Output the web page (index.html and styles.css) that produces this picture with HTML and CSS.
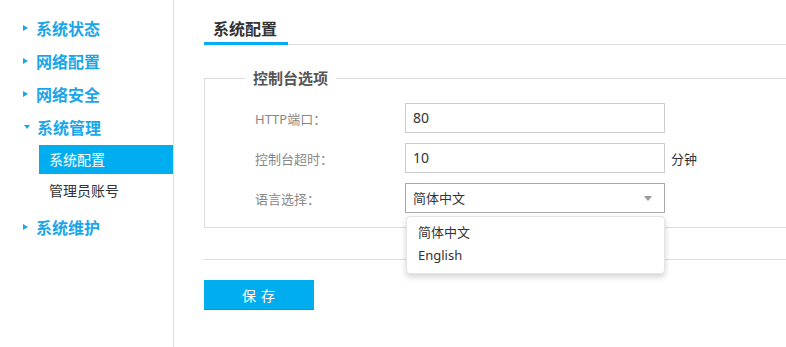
FILE: index.html
```html
<!DOCTYPE html>
<html lang="zh-CN">
<head>
<meta charset="utf-8">
<title>系统配置</title>
<link rel="stylesheet" href="styles.css">
</head>
<body>
<div class="layout">
  <aside class="sidebar">
    <ul class="menu">
      <li class="menu-item"><span class="tri tri-right"></span>系统状态</li>
      <li class="menu-item"><span class="tri tri-right"></span>网络配置</li>
      <li class="menu-item"><span class="tri tri-right"></span>网络安全</li>
      <li class="menu-item"><span class="tri tri-down"></span>系统管理</li>
      <li class="submenu">
        <div class="sub-item active">系统配置</div>
        <div class="sub-item">管理员账号</div>
      </li>
      <li class="menu-item"><span class="tri tri-right"></span>系统维护</li>
    </ul>
  </aside>
  <main class="main">
    <div class="tabs"><div class="tab">系统配置</div></div>
    <fieldset class="group">
      <legend class="group-title">控制台选项</legend>
      <div class="row">
        <label class="label">HTTP端口：</label>
        <div class="input">80</div>
      </div>
      <div class="row">
        <label class="label">控制台超时：</label>
        <div class="input">10</div>
        <span class="unit">分钟</span>
      </div>
      <div class="row">
        <label class="label">语言选择：</label>
        <div class="select-wrap">
          <div class="select">简体中文<span class="caret"></span></div>
          <ul class="dropdown">
            <li class="option">简体中文</li>
            <li class="option">English</li>
          </ul>
        </div>
      </div>
    </fieldset>
    <div class="divider"></div>
    <button class="save">保 存</button>
  </main>
</div>
</body>
</html>
```

FILE: styles.css
```css
html, body {
  margin: 0;
  padding: 0;
  overflow: hidden;
  background: #fff;
}
body {
  font-family: "Noto Sans", "Noto Sans CJK SC", sans-serif;
  color: #333;
  font-size: 14px;
}
.layout {
  display: flex;
  height: 347px;
}
.sidebar {
  width: 173px;
  flex: none;
  border-right: 1px solid #dcdcdc;
}
.menu {
  list-style: none;
  margin: 0;
  padding: 11px 0 0 0;
}
.menu-item {
  display: flex;
  align-items: center;
  height: 33px;
  padding-left: 23px;
  font-size: 16px;
  font-weight: bold;
  color: #1aa6e8;
  font-family: "Noto Sans CJK SC", sans-serif;
}
.tri {
  width: 0;
  height: 0;
  margin-right: 8px;
  margin-top: 1px;
}
.tri-right {
  border-top: 3px solid transparent;
  border-bottom: 3px solid transparent;
  border-left: 5px solid #1aa6e8;
}
.tri-down {
  border-left: 3px solid transparent;
  border-right: 3px solid transparent;
  border-top: 4px solid #1aa6e8;
  margin-left: 1px;
  margin-right: 7px;
}
.submenu {
  padding-left: 39px;
  margin-bottom: 6px;
  margin-top: 2px;
}
.sub-item {
  height: 29px;
  line-height: 29px;
  padding-left: 10px;
  font-size: 14px;
  color: #333;
  font-family: "Noto Sans CJK SC", sans-serif;
}
.sub-item + .sub-item {
  height: 30px;
  line-height: 32px;
}
.sub-item.active {
  background: #00aeef;
  color: #fff;
}
.main {
  flex: 1;
  padding-left: 30px;
  padding-top: 16px;
  overflow: hidden;
}
.tabs {
  display: flex;
  border-bottom: 1px solid #dcdcdc;
}
.tab {
  padding: 0 10px 2px 9px;
  line-height: 24px;
  font-size: 16px;
  font-weight: bold;
  color: #333;
  border-bottom: 3px solid #00aeef;
  margin-bottom: -1px;
  font-family: "Noto Sans CJK SC", sans-serif;
  width: 65px;
}
.group {
  margin: 23px -10px 0 0;
  padding: 15px 0 14px 50px;
  border: 1px solid #dcdcdc;
  min-width: 0;
}
.group-title {
  margin-left: -10px;
  padding: 0 8px;
  line-height: 20px;
  font-size: 15px;
  font-weight: bold;
  color: #555;
  font-family: "Noto Sans CJK SC", sans-serif;
}
.row {
  display: flex;
  align-items: center;
  height: 30px;
}
.row + .row {
  margin-top: 10px;
}
.label {
  width: 150px;
  font-size: 13px;
  color: #888;
}
.input {
  box-sizing: border-box;
  width: 260px;
  height: 30px;
  border: 1px solid #cccccc;
  padding-left: 7px;
  line-height: 28px;
  font-size: 14px;
  color: #333;
}
.unit {
  margin-left: 6px;
  font-size: 13px;
  color: #333;
}
.select-wrap {
  position: relative;
}
.select {
  box-sizing: border-box;
  width: 260px;
  height: 30px;
  border: 1px solid #aaaaaa;
  padding-left: 7px;
  line-height: 28px;
  font-size: 13px;
  color: #333;
  display: flex;
  justify-content: space-between;
  align-items: center;
}
.caret {
  width: 0;
  height: 0;
  border-left: 4px solid transparent;
  border-right: 4px solid transparent;
  border-top: 5px solid #999;
  margin-right: 12px;
}
.dropdown {
  position: absolute;
  left: 1px;
  top: 33px;
  box-sizing: border-box;
  width: 259px;
  margin: 0;
  padding: 4px 0 6px 0;
  list-style: none;
  background: #fff;
  border: 1px solid #e4e4e4;
  border-radius: 4px;
  box-shadow: 0 3px 6px rgba(0, 0, 0, 0.18);
}
.option {
  height: 23px;
  line-height: 23px;
  padding-left: 11px;
  font-size: 13px;
  color: #333;
}
.divider {
  margin-top: 31px;
  border-top: 1px solid #dcdcdc;
}
.save {
  display: block;
  margin-top: 20px;
  width: 110px;
  height: 30px;
  border: 0;
  border-bottom: 1px solid #1997c6;
  background: #00aeef;
  color: #fff;
  font-size: 14px;
  font-family: "Noto Sans CJK SC", sans-serif;
  padding: 0;
  letter-spacing: 1px;
}
```
